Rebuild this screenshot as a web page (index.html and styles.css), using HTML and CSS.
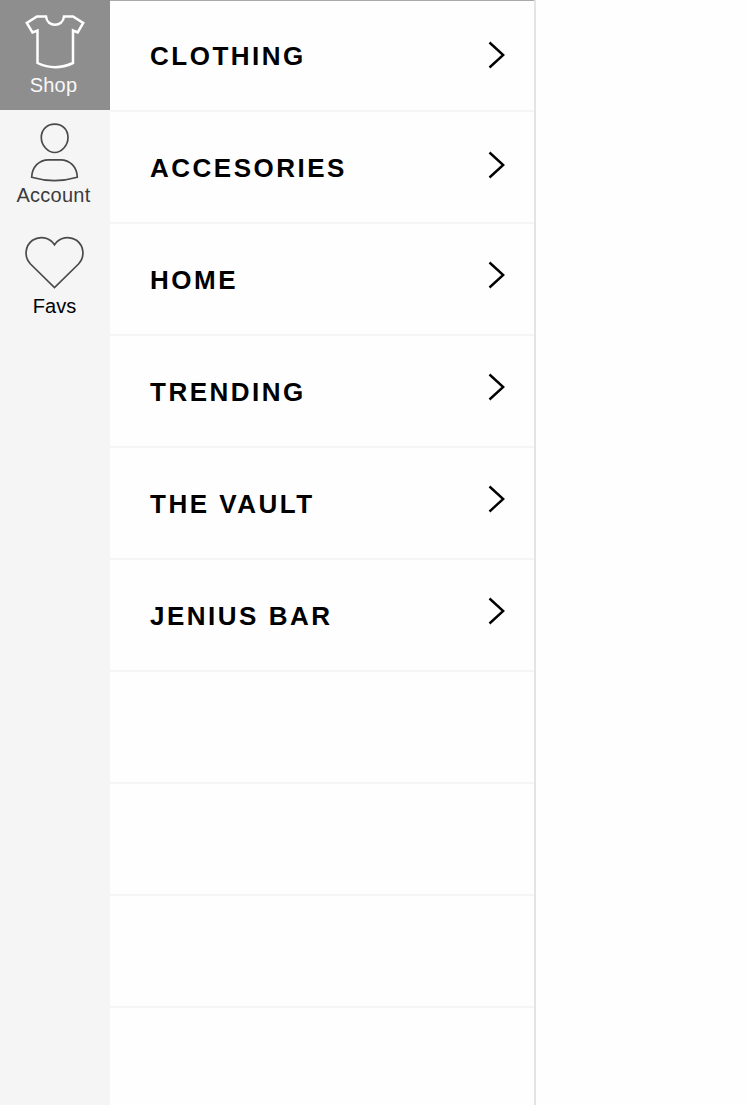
FILE: index.html
```html
<!DOCTYPE html>
<html lang="en">
<head>
<meta charset="utf-8">
<title>Shop</title>
<link rel="stylesheet" href="styles.css">
</head>
<body>
<div class="app">
  <nav class="sidebar">
    <a class="tab tab-active">
      <svg class="icon" viewBox="0 0 110 74"><path d="M37 16.500H46C47 27.500 63 27.500 64 16.500H73L83.200 23L77.700 32.500L73 30.500V63Q55 71.500 37.500 63V30.500L32.500 32.500L26.800 23Z" fill="none" stroke="#fff" stroke-width="2.500"/></svg>
      <span class="label label-shop">Shop</span>
    </a>
    <a class="tab">
      <svg class="icon" viewBox="0 0 110 74"><g fill="none" stroke="#4a4a4a" stroke-width="1.700"><path d="M54.700 14.200C62.500 14.200 68 19.500 68 27.500C68 35.500 61.500 42.500 54.700 42.500C48 42.500 41.300 35.500 41.300 27.500C41.300 19.500 47 14.200 54.700 14.200Z"/><path d="M48.500 49.800H60.500C70 49.800 77 57 77.300 67.300Q54.500 74 31.700 67.300C32 57 39 49.800 48.500 49.800Z"/></g></svg>
      <span class="label label-account">Account</span>
    </a>
    <a class="tab">
      <svg class="icon" viewBox="0 0 110 74"><path d="M54.500 24.700C49.500 17 39.500 15.800 32.500 20.300C25 26 23.700 36.500 30.500 44L54.500 67.600L78.500 44C85.300 36.500 84 26 76.500 20.300C69.500 15.800 59.500 17 54.500 24.700Z" fill="none" stroke="#4a4a4a" stroke-width="1.700"/></svg>
      <span class="label label-favs">Favs</span>
    </a>
  </nav>
  <main class="menu">
    <a class="row">CLOTHING<svg class="chevron chevron-first" viewBox="0 0 18 28"><path d="M1.500 1.500L15.200 14L1.500 26.500"/></svg></a>
    <a class="row">ACCESORIES<svg class="chevron chevron-second" viewBox="0 0 18 28"><path d="M1.500 1.500L15.200 14L1.500 26.500"/></svg></a>
    <a class="row">HOME<svg class="chevron" viewBox="0 0 18 28"><path d="M1.500 1.500L15.200 14L1.500 26.500"/></svg></a>
    <a class="row">TRENDING<svg class="chevron" viewBox="0 0 18 28"><path d="M1.500 1.500L15.200 14L1.500 26.500"/></svg></a>
    <a class="row">THE VAULT<svg class="chevron" viewBox="0 0 18 28"><path d="M1.500 1.500L15.200 14L1.500 26.500"/></svg></a>
    <a class="row">JENIUS BAR<svg class="chevron" viewBox="0 0 18 28"><path d="M1.500 1.500L15.200 14L1.500 26.500"/></svg></a>
    <div class="row"></div>
    <div class="row"></div>
    <div class="row"></div>
    <div class="row row-last"></div>
  </main>
</div>
</body>
</html>
```

FILE: styles.css
```css
* { box-sizing: border-box; }
body {
  margin: 0;
  background: #fefefe;
  font-family: "Liberation Sans", Arial, sans-serif;
}
.app {
  display: flex;
  height: 1105px;
  overflow: hidden;
}
.sidebar {
  width: 110px;
  background: #f5f5f5;
}
.tab {
  display: flex;
  flex-direction: column;
  height: 110px;
  color: #3c3c3c;
}
.tab-active {
  background: #8e8e8e;
  color: #f8f8f8;
}
.icon {
  width: 110px;
  height: 74px;
  flex: none;
}
.label {
  font-size: 20px;
  line-height: 22px;
  text-align: center;
  white-space: nowrap;
}
.label-shop {
  padding-right: 3px;
  letter-spacing: 0.2px;
}
.label-account {
  padding-right: 3px;
  letter-spacing: 0.25px;
}
.label-favs {
  padding-right: 1px;
  padding-top: 1px;
  color: #000;
}
.menu {
  width: 426px;
  background: linear-gradient(#a9a9a9, #a9a9a9) top / 100% 1px no-repeat border-box #fefefe;
  border-right: 2px solid #e4e4e4;
}
.row {
  display: flex;
  align-items: flex-start;
  justify-content: space-between;
  height: 112px;
  padding: 41px 28px 0 40px;
  border-bottom: 2px solid #f5f5f5;
  color: #000;
  font-size: 26px;
  font-weight: 700;
  letter-spacing: 2.5px;
  line-height: 30px;
}
.row-last { border-bottom: 0; }
.chevron {
  width: 18px;
  height: 28px;
  margin-top: -4px;
  flex: none;
  fill: none;
  stroke: #000;
  stroke-width: 2.4;
}
.chevron-first { margin-top: 0; }
.chevron-second { margin-top: -2px; }
```
